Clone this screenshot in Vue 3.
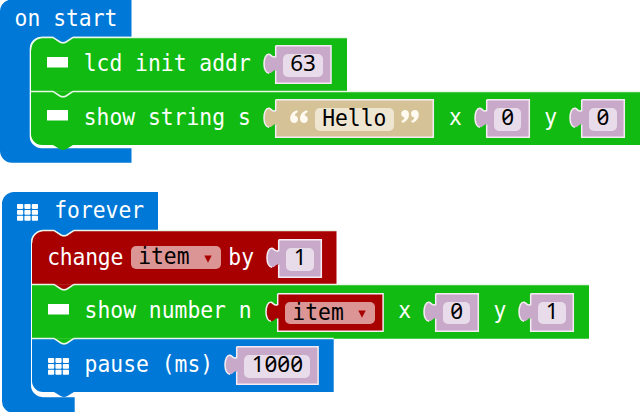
<script setup>
const GREEN = '#12bb12'
const BLUE = '#0078d7'
const RED = '#a80000'

const label = (text, gap, extra = {}) => ({ kind: 'label', text, gap, ...extra })
const num = (text, gap, width) => ({ kind: 'num', text, gap, width })

const stacks = [
  {
    id: 'start', x: 0, y: 0, inset: 31, head: 37.8, title: 'on start', icon: false, pitch: 53.8,
    shape: 'M12,-0.5 H131.5 V36.7 H73 L66,41.4 Q63,43 60,41.4 L53,36.7 H41.5 A12,12 0 0 0 29.7,48.5 V136 A12,12 0 0 0 41.5,148.2 H131.5 V162.7 H12 A12,12 0 0 1 0,150.7 V11.5 A12,12 0 0 1 12,-0.5 Z',
    rows: [
      { width: 316, color: GREEN, prev: BLUE, icon: 'lcd', items: [label('lcd init addr', 52.7, { width: 166.5 }), num('63', 24.6, 56.7)] },
      {
        width: 612, color: GREEN, prev: GREEN, icon: 'lcd', last: true,
        items: [label('show string s', 52.7, { width: 166.5 }), { kind: 'string', text: 'Hello', gap: 24.6, width: 159 },
          label('x', 15.2, { width: 13 }), num('0', 23.7, 44), label('y', 14.7, { width: 13 }), num('0', 23.7, 44)],
      },
    ],
  },
  {
    id: 'forever', x: 2, y: 192, inset: 30.2, head: 39.4, title: 'forever', icon: true, pitch: 53.8,
    shape: 'M12,0 H156 V38.4 H73 L66,43 Q63,44.6 60,43 L53,38.4 H41 A12,12 0 0 0 29,50.2 V193 A12,12 0 0 0 41,205.2 H72.7 V221 H12 A12,12 0 0 1 0,208 V12 A12,12 0 0 1 12,0 Z',
    rows: [
      {
        width: 304.5, color: RED, prev: BLUE,
        items: [label('change', 15, { width: 77, tight: true }), { kind: 'menu', text: 'item', gap: 6.6, width: 90.5 },
          label('by', 7, { width: 26 }), num('1', 23.8, 44)],
      },
      {
        width: 557, color: GREEN, prev: RED, icon: 'lcd',
        items: [label('show number n', 52.4, { width: 167.4 }), { kind: 'variable', text: 'item', gap: 24.8, width: 106.8 },
          label('x', 14.8, { width: 13 }), num('0', 23.3, 44), label('y', 14.8, { width: 13 }), num('1', 23.7, 44)],
      },
      { width: 301.7, color: BLUE, prev: GREEN, icon: 'grid', last: true, items: [label('pause (ms)', 52.4, { width: 127.4 }), num('1000', 24, 82.8)] },
    ],
  },
]

function edge(first) {
  return (first ? 'M-0.3,12 A12,12 0 0 1 11.5,-0.6' : 'M0,-0.6') + ' H22 L29,4 Q32,5.6 35,4 L42,-0.6'
}
function body(row, first, pitch) {
  const h = pitch - (row.last ? 0.9 : 0)
  const bottom = row.last ? `H42 L35,${h + 4.4} Q32,${h + 6} 29,${h + 4.4} L22,${h} H11 A11,11 0 0 1 0,${h - 11}` : 'H0'
  return `${first ? 'M0,11 A11,11 0 0 1 11,0' : 'M0,0'} H22 L29,4.5 Q32,6 35,4.5 L42,0 H${row.width} V${h} ${bottom} Z`
}
const fills = { num: '#c8a9ca', string: '#d5c297', variable: RED }
const openQuote = 'M7,.2 C3,1.2 .2,4.5 .2,8.6 C.2,11.4 1.6,13 4,13 C6.4,13 8,11.4 8,9.2 C8,7.2 6.6,5.8 4.7,5.6 C5,4 6,2.8 8,1.9 Z M16.8,.2 C12.8,1.2 10,4.5 10,8.6 C10,11.4 11.4,13 13.8,13 C16.2,13 17.8,11.4 17.8,9.2 C17.8,7.2 16.4,5.8 14.5,5.6 C14.8,4 15.8,2.8 17.8,1.9 Z'
</script>

<template>
  <main class="workspace">
    <section v-for="s in stacks" :key="s.id" class="stack" :style="{ left: s.x + 'px', top: s.y + 'px', '--inset': s.inset + 'px', '--pitch': s.pitch + 'px' }">
      <svg class="shape" width="160" height="222"><path :d="s.shape" :fill="BLUE" /></svg>
      <header class="head" :class="{ iconic: s.icon }" :style="{ height: s.head + 'px' }">
        <svg v-if="s.icon" class="grid-icon" width="21" height="17" viewBox="0 0 21 17" fill="#fff">
          <template v-for="r in 3" :key="r"><rect v-for="c in 3" :key="c" :x="(c - 1) * 7.4" :y="(r - 1) * 5.9" width="6.2" height="4.9" rx=".8" /></template>
        </svg>
        <span class="text">{{ s.title }}</span>
      </header>
      <div class="rows">
        <div v-for="(row, i) in s.rows" :key="i" class="row">
          <svg class="shape" :width="row.width" :height="s.pitch">
            <path d="M21,-.5 L29,4.5 Q32,6 35,4.5 L43,-.5 Z" :fill="row.prev" />
            <path :d="body(row, i === 0, s.pitch)" :fill="row.color" />
            <path :d="edge(i === 0)" class="line" />
            <path :d="`M42,-0.6 H${row.width}`" class="line" />
          </svg>
          <svg v-if="row.icon" class="row-icon" width="21" height="17" viewBox="0 0 21 17" fill="#fff">
            <rect v-if="row.icon === 'lcd'" width="21" height="10.5" />
            <template v-else><template v-for="r in 3" :key="r"><rect v-for="c in 3" :key="c" :x="(c - 1) * 7.4" :y="(r - 1) * 5.9" width="6.2" height="4.9" rx=".8" /></template></template>
          </svg>
          <div class="items">
            <template v-for="(it, k) in row.items" :key="k">
              <span v-if="it.kind === 'label'" class="label" :style="{ width: it.width + 'px', marginLeft: it.gap + 'px' }"><span class="text" :class="{ tight: it.tight }">{{ it.text }}</span></span>
              <span v-else-if="it.kind === 'menu'" class="pill pink menu bare" :style="{ width: it.width + 'px', marginLeft: it.gap + 'px' }">
                <span class="tall">{{ it.text }}</span><svg width="8" height="8"><path d="M.3,.5 H7.7 L4,7.7 Z" fill="#a80000" /></svg>
              </span>
              <span v-else class="field" :class="it.kind" :style="{ width: it.width + 'px', marginLeft: it.gap + 'px' }">
                <svg class="shape" :width="it.width" height="39">
                  <path :d="`M.7,.7 H${it.width - 0.7} V38.2 H.7 V25.5 C-1,24 -3,28.3 -6,28.3 C-9,28.3 -11,24 -11,19 C-11,13.5 -9,8.8 -6,9.3 C-3,10 -3,13.5 .7,11.5 Z`" :fill="fills[it.kind]" />
                  <path :d="`M.7,.7 H${it.width - 0.7} V38.2 H.7 V25.5 M-6,28.3 C-9,28.3 -11,24 -11,19 C-11,13.5 -9,8.8 -6,9.3 C-3,10 -3,13.5 .7,11.5 V.7`" class="line socket" />
                </svg>
                <svg v-if="it.kind === 'string'" class="quote" width="18" height="13" viewBox="0 0 18 13" fill="#fffaf0"><path :d="openQuote" /></svg>
                <span class="pill" :class="{ 'pink menu': it.kind === 'variable' }">
                  <span class="tall">{{ it.text }}</span><svg v-if="it.kind === 'variable'" width="8" height="8"><path d="M.3,.5 H7.7 L4,7.7 Z" fill="#a80000" /></svg>
                </span>
                <svg v-if="it.kind === 'string'" class="quote closing" width="18" height="13" viewBox="0 0 18 13" fill="#fffaf0"><path :d="openQuote" /></svg>
              </span>
            </template>
          </div>
        </div>
      </div>
    </section>
  </main>
</template>

<style>
html, body { margin: 0; background: #fff; overflow: hidden; }
</style>

<style scoped>
.workspace { position: relative; width: 640px; height: 412px; overflow: hidden; background: #fff; font-family: "DejaVu Sans Mono", monospace; font-size: 21.35px; line-height: 24px; white-space: pre; }
.stack { position: absolute; }
.shape { position: absolute; left: 0; top: 0; overflow: visible; }
.line { fill: none; stroke: #e9f7e9; stroke-width: 1.5; }
.socket { stroke: #f4ecf2; }
.head { position: relative; display: flex; align-items: flex-start; box-sizing: border-box; padding: 6.6px 0 0 14.6px; }
.head.iconic { padding-left: 15.4px; gap: 15.8px; }
.text, .tall { display: inline-block; transform: scaleY(1.06); transform-origin: 0 19.4px; }
.text { color: #fff; }
.grid-icon { margin-top: 5px; }
.rows { position: relative; margin-left: var(--inset); }
.row { position: relative; height: var(--pitch); width: max-content; }
.row-icon { position: absolute; left: 15.5px; top: 18.8px; }
.items { position: relative; display: flex; align-items: flex-start; }
.label { flex: none; margin-top: 14.2px; }
.tight { letter-spacing: -.2px; }
.field { position: relative; flex: none; height: 39px; margin-top: 7.5px; display: flex; justify-content: center; align-items: flex-start; }
.pill { position: relative; box-sizing: border-box; flex: none; display: flex; align-items: flex-start; margin-top: 8.9px; height: 22.8px; line-height: 22px; padding: 0 7.3px; border-radius: 5px; background: #e9dcea; color: #000; }
.num .pill { font-family: "Noto Sans", sans-serif; font-size: 22.45px; font-feature-settings: "zero" 1; line-height: 18.4px; }
.num .tall { transform: none; }
.string .pill { background: #efe6d2; }
.pill.pink { background: #dc9595; justify-content: space-between; width: 90.4px; padding: 0 9.4px 0 7.4px; }
.menu svg { margin-top: 8.3px; }
.bare { margin-top: 14.9px; line-height: 22.4px; }
.quote { position: relative; margin-top: 10.6px; margin-right: 7px; }
.quote.closing { margin: 10.6px 0 0 7px; transform: rotate(180deg); }
</style>
